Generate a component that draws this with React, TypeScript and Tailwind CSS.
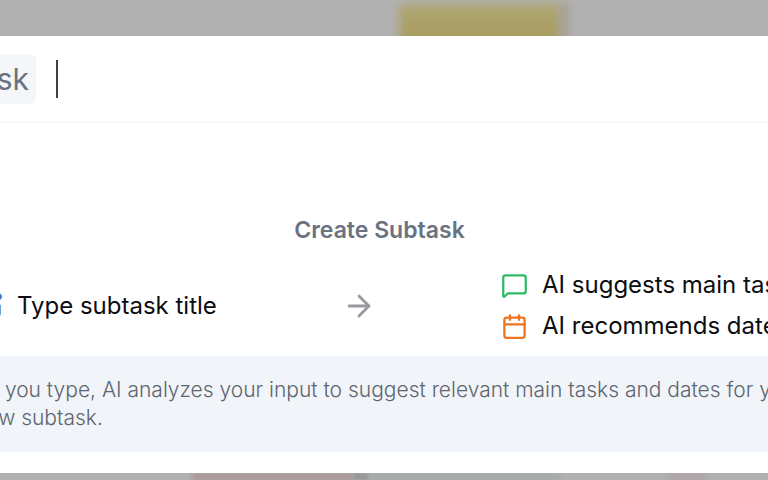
import React, { useState } from 'react';
import { ArrowRight, Calendar, MessageSquare, SquarePen } from 'lucide-react';

interface HintProps {
  icon: React.ReactNode;
  children: React.ReactNode;
}

const Hint: React.FC<HintProps> = ({ icon, children }) => (
  <div className="flex items-center gap-3.5">
    {icon}
    <span className="whitespace-nowrap">{children}</span>
  </div>
);

const App: React.FC = () => {
  const [title, setTitle] = useState('');

  return (
    <div className="h-screen overflow-hidden flex flex-col bg-[#b1b1b1] font-['Inter',sans-serif]">
      {/* Dimmed board behind the dialog */}
      <div className="h-9 shrink-0 overflow-hidden flex">
        <div className="w-[52%]" />
        <div className="w-[21%] h-12 mt-1 bg-linear-to-b from-[#b0a772] to-[#a39759] blur-[5px]" />
        <div className="w-[1%] h-12 mt-1 bg-[#a39d90] blur-[4px]" />
      </div>

      {/* The dialog is wider than the window and runs off both sides */}
      <div role="dialog" aria-label="Create Subtask" className="-ml-12 -mr-20 bg-white">
        <div className="h-[87px] px-6 flex items-center gap-5 border-b-2 border-[#f9fafb]">
          <label
            htmlFor="subtask-title"
            className="w-[60px] h-[50px] rounded-md bg-[#f5f6f8] px-[7px] flex items-center justify-end text-3xl text-gray-500"
          >
            Subtask
          </label>
          <div className="flex-1 flex items-center">
            <span className="w-0.5 h-[38px] bg-[#3f4045]" />
            <input
              id="subtask-title"
              type="text"
              value={title}
              onChange={(e) => setTitle(e.target.value)}
              className="flex-1 h-10 outline-none text-3xl text-gray-900 caret-transparent"
            />
          </div>
        </div>

        <div className="pt-[91px] pl-6 pr-[45px] pb-3.5">
          <h2 className="pr-5 text-center text-[23px] leading-8 font-semibold text-gray-500">
            Create Subtask
          </h2>
          <div className="mt-[23px] flex items-center justify-between text-2xl text-[#0c0d10]">
            <Hint icon={<SquarePen size={27} className="text-[#3b7dd8]" />}>Type subtask title</Hint>
            <ArrowRight size={34} className="text-[#999a9d]" />
            <div className="flex flex-col gap-[9px]">
              <Hint icon={<MessageSquare size={27} className="text-[#2fb966]" />}>
                AI suggests main tasks
              </Hint>
              <Hint icon={<Calendar size={27} className="text-[#ee7420]" />}>
                AI recommends dates
              </Hint>
            </div>
          </div>
        </div>

        <div className="h-24 bg-[#f1f4f8] pl-[22px] pr-8 py-5">
          <p className="text-[21px] leading-7 font-light text-[#5d6571]">
            As you type, AI analyzes your input to suggest relevant main tasks and dates for your
            new subtask.
          </p>
        </div>
        <div className="h-[21px]" />
      </div>

      <div className="flex-1 overflow-hidden flex">
        <div className="w-1/4" />
        <div className="w-[21%] bg-[#a99194] blur-[3px]" />
        <div className="w-[2%] bg-[#949494] blur-[2px]" />
        <div className="w-1/4 bg-[#a3a9a7] blur-[3px]" />
        <div className="w-[5%] ml-[14%] bg-[#b0a0a2] blur-[3px]" />
      </div>
    </div>
  );
};

export default App;
